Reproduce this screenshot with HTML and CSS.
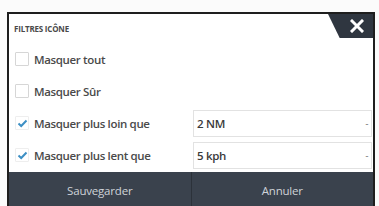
FILE: index.html
```html
<!DOCTYPE html>
<html lang="fr">
<head>
<meta charset="utf-8">
<link rel="stylesheet" href="styles.css">
</head>
<body>
<div class="dialog">
  <div class="header">
    <div class="title">FILTRES ICÔNE</div>
    <div class="close"><svg width="14" height="14" viewBox="0 0 14 14"><path d="M2 2 L12 12 M12 2 L2 12" stroke="#fff" stroke-width="3" stroke-linecap="square"/></svg></div>
  </div>
  <div class="row">
    <span class="check"></span><span class="label">Masquer tout</span>
  </div>
  <div class="row">
    <span class="check"></span><span class="label">Masquer Sûr</span>
  </div>
  <div class="row">
    <span class="check on"><svg width="11" height="9" viewBox="0 0 11 9"><path d="M1.5 4.5 L4.2 7 L9.5 1.5" fill="none" stroke="#3d8fc4" stroke-width="2"/></svg></span><span class="label">Masquer plus loin que</span>
    <div class="select"><span>2 NM</span><span class="dot">-</span></div>
  </div>
  <div class="row">
    <span class="check on"><svg width="11" height="9" viewBox="0 0 11 9"><path d="M1.5 4.5 L4.2 7 L9.5 1.5" fill="none" stroke="#3d8fc4" stroke-width="2"/></svg></span><span class="label">Masquer plus lent que</span>
    <div class="select"><span>5 kph</span><span class="dot">-</span></div>
  </div>
  <div class="footer">
    <div class="btn">Sauvegarder</div>
    <div class="btn">Annuler</div>
  </div>
</div>
</body>
</html>
```
FILE: styles.css
```css
html, body {
  margin: 0;
  padding: 0;
  background: #fbfbfb;
  font-family: "Open Sans", "Liberation Sans", sans-serif;
  overflow: hidden;
}
.dialog {
  margin: 12px 0 0 7px;
  width: 364px;
  height: 194px;
  background: #fff;
  border: 2px solid #1e1e1e;
  border-bottom: none;
  display: flex;
  flex-direction: column;
}
.header {
  height: 29px;
  display: flex;
  justify-content: space-between;
  align-items: flex-start;
}
.title {
  margin: 9px 0 0 5px;
  font-size: 8px;
  font-weight: 700;
  color: #4a4a4a;
  letter-spacing: -0.2px;
}
.close {
  width: 45px;
  height: 24px;
  background: #2f3640;
  clip-path: polygon(0 0, 100% 0, 100% 100%, 26% 100%);
  display: flex;
  align-items: center;
  justify-content: center;
  padding-left: 12px;
  box-sizing: border-box;
}
.row {
  height: 32px;
  display: flex;
  align-items: center;
  padding-left: 6px;
}
.check {
  width: 12px;
  height: 12px;
  border: 1px solid #d6d6d6;
  border-radius: 1px;
  display: flex;
  align-items: center;
  justify-content: center;
  flex: none;
}
.check.on {
  border-color: #eee;
}
.label {
  margin-left: 5px;
  width: 150px;
  font-size: 11.5px;
  font-weight: 600;
  color: #4a4a4a;
  letter-spacing: -0.35px;
  white-space: nowrap;
}
.select {
  margin-left: 9px;
  margin-right: 1px;
  flex: 1;
  height: 25px;
  border: 1px solid #e2e2e2;
  display: flex;
  align-items: center;
  justify-content: space-between;
  padding: 0 3px;
  font-size: 11.5px;
  font-weight: 600;
  color: #3a3a3a;
  letter-spacing: -0.3px;
}
.dot {
  color: #888;
  font-size: 9px;
}
.footer {
  margin-top: 1px;
  flex: 1;
  display: flex;
  background: #3a424d;
}
.btn {
  flex: 1;
  display: flex;
  align-items: center;
  justify-content: center;
  font-size: 11.5px;
  color: #cfd3d8;
  letter-spacing: -0.2px;
}
.btn + .btn {
  border-left: 1px solid #2c323a;
}
```
